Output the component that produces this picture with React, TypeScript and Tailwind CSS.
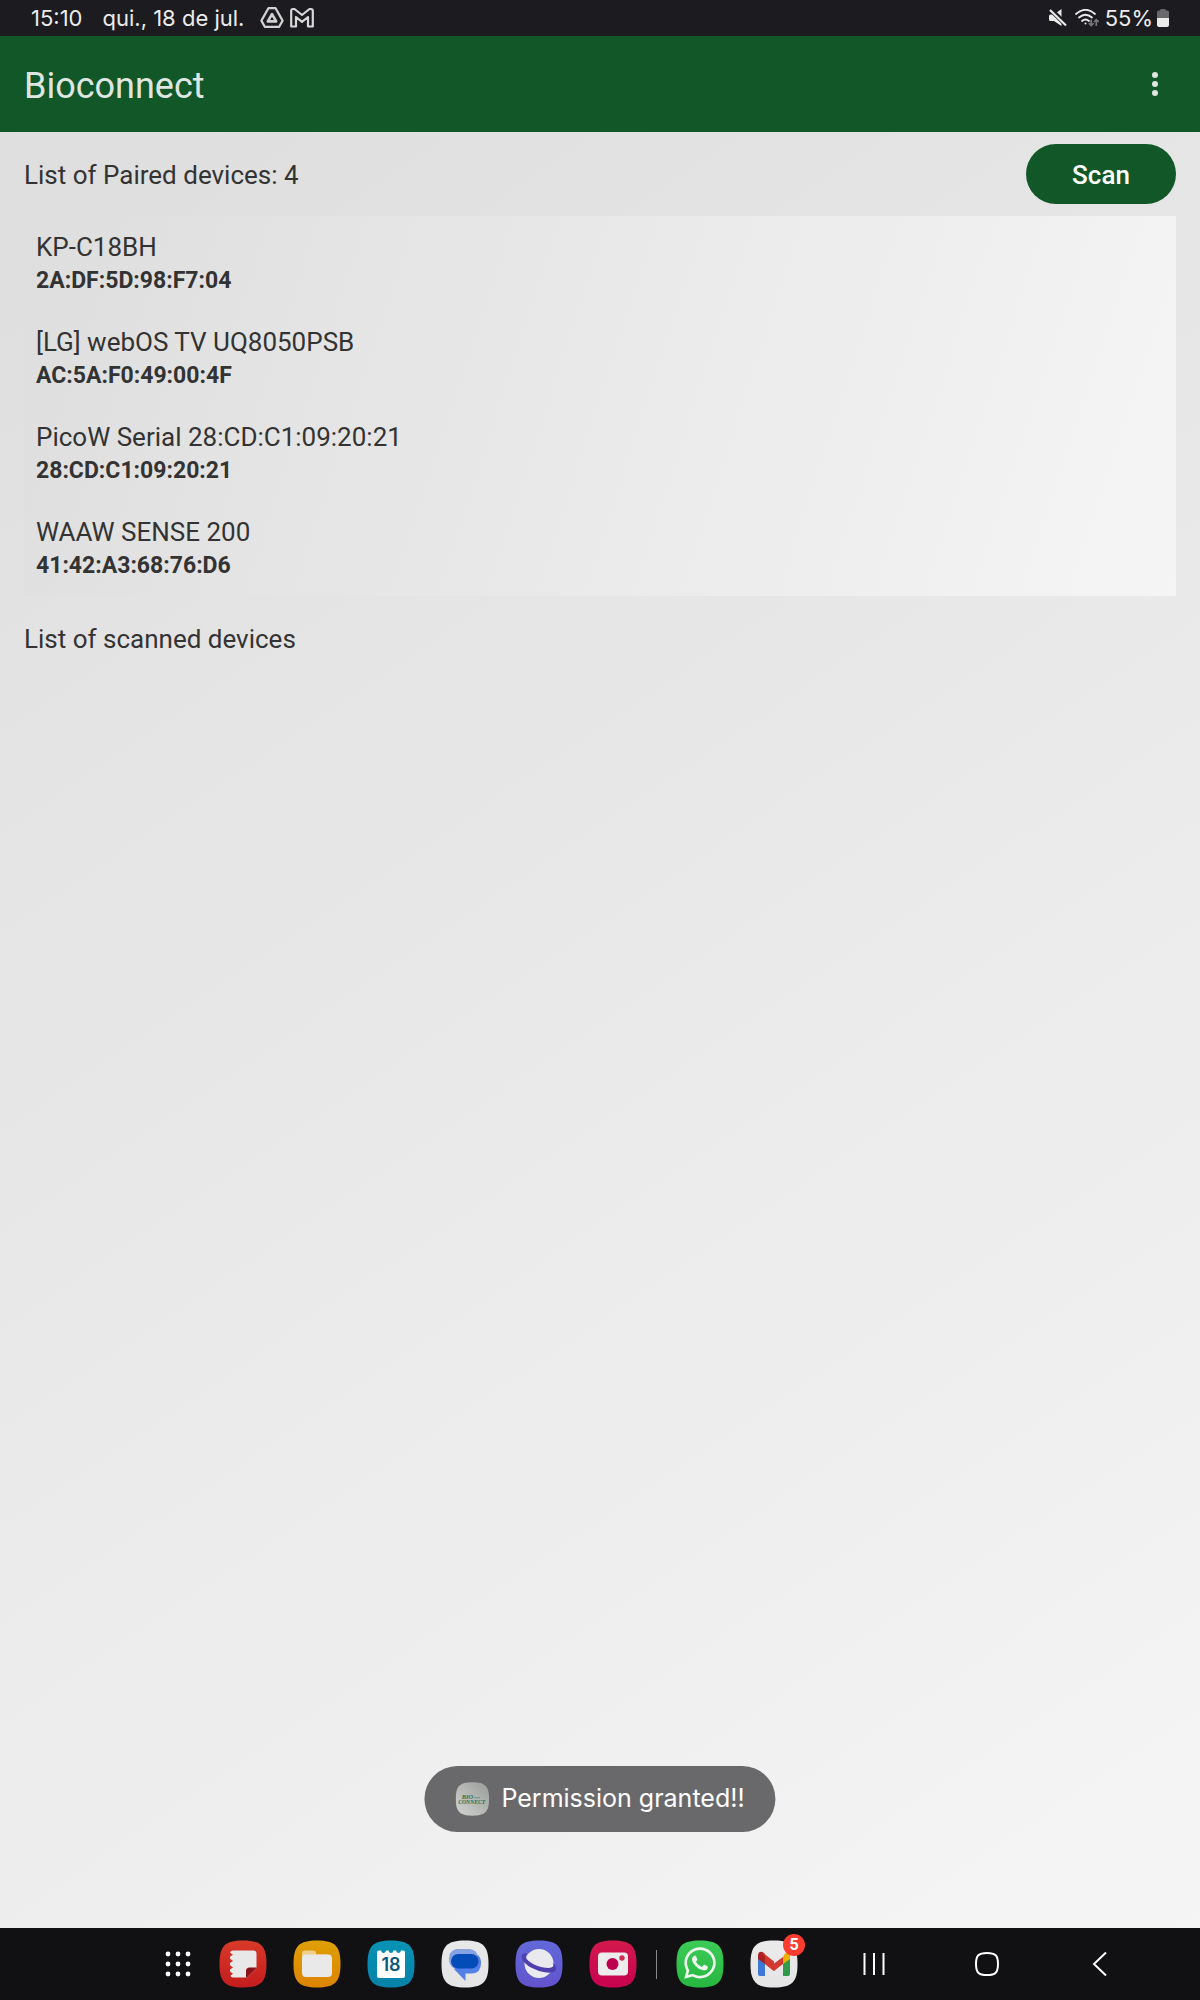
import React, { useState } from "react";
import { FaWhatsapp } from "react-icons/fa";

const SQUIRCLE = "M24 .5C42 .5 47.5 6 47.5 24S42 47.500 24 47.500 .5 42 .5 24 6 .5 24 .5Z";

const devices = [
  { name: "KP-C18BH", mac: "2A:DF:5D:98:F7:04" },
  { name: "[LG] webOS TV UQ8050PSB", mac: "AC:5A:F0:49:00:4F" },
  { name: "PicoW Serial 28:CD:C1:09:20:21", mac: "28:CD:C1:09:20:21" },
  { name: "WAAW SENSE 200", mac: "41:42:A3:68:76:D6" },
];

function StatusBar() {
  return (
    <header className="flex h-9 items-center justify-between bg-[#1c1b20] pr-[31px] pl-[31px] font-['Inter',sans-serif] text-[22px] leading-9 text-[#ebebeb]">
      <div className="flex items-center">
        <time>15:10</time>
        <span className="ml-5">qui., 18 de jul.</span>
        <svg className="ml-4 h-6 w-6" viewBox="0 0 24 24" fill="none" stroke="#d2d2d2" strokeLinejoin="round" aria-label="Drive">
          <path d="M8.400 2.200H15.600L22.600 14.600 19.200 20.800H4.800L1.400 14.600Z" strokeWidth="2.200" />
          <path d="M12 8.200 16.200 15.400H7.800Z" strokeWidth="2.600" />
        </svg>
        <svg className="ml-1.5 h-6 w-6" viewBox="0 0 24 24" fill="none" stroke="#d8d8d8" strokeWidth="2.200" strokeLinejoin="round" aria-label="Gmail">
          <path d="M1.200 5Q1.200 3 3.200 3H4.500L12 9 19.500 3H20.800Q22.800 3 22.800 5V20.500H18V11L12 15.800 6 11V20.500H1.200Z" />
        </svg>
      </div>
      <div className="flex items-center">
        <svg className="h-[18px] w-[18px]" viewBox="0 0 18 18" fill="#ebebeb" aria-label="Muted">
          <path d="M1.500 5.500H5L12.500 0V17L5 12H1.500Q0 12 0 10.500V7Q0 5.500 1.500 5.500Z" />
          <path d="M.5-.5 18 16.500" stroke="#1c1b20" strokeWidth="5" />
          <path d="M1 1 17 16.500" stroke="#ebebeb" strokeWidth="2.200" />
        </svg>
        <svg className="ml-2 h-[18px] w-6" viewBox="0 0 24 18" fill="none" stroke="#ebebeb" strokeWidth="1.800" strokeLinecap="round" aria-label="Wi-Fi">
          <path d="M1 5Q10.500-3.500 20 5" />
          <path d="M4 8.500Q10.500 3 17 8.500" />
          <path d="M7 12Q10.500 9 14 12" />
          <circle cx="10.500" cy="14.500" r="1" fill="#ebebeb" stroke="none" />
          <g stroke="#77767a" strokeWidth="1.700" strokeLinecap="butt">
            <path d="M16.200 10.500V16.500M13.800 14.200 16.200 16.600 18.600 14.200" />
            <path d="M21.300 17V11M18.900 13 21.300 10.600 23.700 13" />
          </g>
        </svg>
        <span className="ml-1.5">55%</span>
        <svg className="ml-1 h-[18px] w-3" viewBox="0 0 12 18" aria-label="Battery">
          <path d="M3 1.500Q3 0 4.500 0H7.500Q9 0 9 1.500H10.500Q12 1.500 12 3V9H0V3Q0 1.500 1.500 1.500Z" fill="#69686c" />
          <path d="M0 9H12V16Q12 18 10 18H2Q0 18 0 16Z" fill="#ebebeb" />
        </svg>
      </div>
    </header>
  );
}

function AppIcon({ label, from, to, children }: { label: string; from: string; to: string; children: React.ReactNode }) {
  const id = "fill-" + label.replace(/\W/g, "");
  return (
    <button type="button" aria-label={label} className="relative flex h-[72px] w-[74px] items-center justify-center">
      <svg className="h-12 w-12" viewBox="0 0 48 48">
        <defs>
          <linearGradient id={id} x1="0" y1="0" x2="0" y2="1">
            <stop stopColor={from} />
            <stop offset="1" stopColor={to} />
          </linearGradient>
        </defs>
        <path d={SQUIRCLE} fill={`url(#${id})`} />
        {children}
      </svg>
    </button>
  );
}

function TaskBar() {
  return (
    <nav className="flex h-[72px] shrink-0 items-center justify-end bg-[#111113] pr-11">
      <button type="button" aria-label="All apps" className="flex h-full w-14 items-center justify-center">
        <svg className="h-[26px] w-[26px]" viewBox="0 0 26 26" fill="#fff">
          {[3, 13, 23].map((y) => [3, 13, 23].map((x) => <circle key={`${x}-${y}`} cx={x} cy={y} r="2.400" />))}
        </svg>
      </button>
      <AppIcon label="Notes" from="#d83a28" to="#c41c1e">
        <path d="M14 10.500H34Q37.500 10.500 37.500 14V28L28 37.500H14Q11.500 37.500 11.500 35.500L14 33.800 11 31.500V29.500L14 27.500 11 25.200V23L14 21 11 18.700V16.700L14 14.800 11 12.500Q11.500 10.500 14 10.500Z" fill="#e8e8e8" />
        <path d="M37.500 27.500V28L28 37.500H27V31Q27 27.500 30.500 27.500Z" fill="#8d1118" />
      </AppIcon>
      <AppIcon label="My Files" from="#dfa006" to="#dc8300">
        <path d="M9 20V13.500Q9 10.500 12 10.500H20Q23 10.500 23 13.500V14.500H34V20Z" fill="#f0cf88" />
        <rect x="9" y="14.500" width="30" height="22.500" rx="4" fill="#e9e9e9" />
      </AppIcon>
      <AppIcon label="Calendar" from="#0793b4" to="#0781a8">
        <path d="M12 10.500H14Q14.500 13 16.500 13T19 10.500H21.500Q22 13 24 13T26.500 10.500H29Q29.500 13 31.500 13T34 10.500H36Q38 10.500 38 12.500V36Q38 38 36 38H12Q10 38 10 36V12.500Q10 10.500 12 10.500Z" fill="#fff" />
        <text x="24" y="31" textAnchor="middle" fontFamily="Inter, sans-serif" fontSize="18" fontWeight="600" fill="#0b5878">18</text>
      </AppIcon>
      <AppIcon label="Messages" from="#e8e8e8" to="#e5e5e5">
        <path d="M15 9H29Q36 10 37 17V20L15 29Q8 27 8 19T15 9Z" fill="#86a2e3" />
        <path d="M37 15Q40 18 40 23 40 33 31 33.500H24.500V41L13 29Z" fill="#5380e8" />
        <rect x="10" y="14" width="27.500" height="14.500" rx="7.250" fill="#044cb7" />
      </AppIcon>
      <AppIcon label="Internet" from="#6169d9" to="#6253cd">
        <circle cx="24" cy="23.500" r="14.500" fill="#e9e9ee" />
        <path d="M12 13Q5 13 7 19 10 26 24 31 38 35 41 30 42 26 37.500 23 41 27 34 28 26 28 18 24 8 18.500 12 13Z" fill="#503fae" />
      </AppIcon>
      <AppIcon label="Camera" from="#d3194d" to="#c8024f">
        <rect x="9" y="12.500" width="30" height="23" rx="4" fill="#ececec" />
        <circle cx="23.500" cy="24" r="6" fill="#bd004d" />
        <circle cx="33" cy="18" r="2.700" fill="#d12d50" />
      </AppIcon>
      <div className="mx-1.5 h-[29px] w-px bg-[#8a8a8c]" />
      <AppIcon label="WhatsApp" from="#3bcc58" to="#27b63f">
        <FaWhatsapp x="6" y="5" size={36} color="#eef6ee" />
      </AppIcon>
      <div className="relative">
        <AppIcon label="Gmail" from="#ebebeb" to="#e5e5e5">
          <path d="M8 16 15 20V36H10Q8 36 8 34Z" fill="#4078d8" />
          <path d="M33 20 40 15V34Q40 36 38 36H33Z" fill="#319b4b" />
          <path d="M33 16.500 35.500 13Q40 11 40 16V19L33 24Z" fill="#efb000" />
          <path d="M15 17 24 23.500 33 17V24L24 31 15 24Z" fill="#d33a2f" />
          <path d="M15 24 8 19V16Q8 11 12.500 12L15 14Z" fill="#ad2022" />
          <path d="M12 12 24 21.500V31L15 24V17Z" fill="#d33a2f" />
        </AppIcon>
        <span className="absolute top-1.5 right-1.5 h-[22px] w-[22px] rounded-full bg-[#fd3c30] text-center font-['Roboto',sans-serif] text-base leading-[22px] font-bold text-white">5</span>
      </div>
      <div className="ml-1.5 flex h-full text-white">
        <button type="button" aria-label="Recents" className="flex h-full w-[113px] items-center justify-center">
          <svg className="h-6 w-6" viewBox="0 0 24 24" stroke="currentColor" strokeWidth="2"><path d="M2.500 1V23M12 1V23M21.500 1V23" /></svg>
        </button>
        <button type="button" aria-label="Home" className="flex h-full w-[113px] items-center justify-center">
          <svg className="h-6 w-6" viewBox="0 0 24 24" fill="none" stroke="currentColor" strokeWidth="2"><path d="M12 1C20.500 1 23 3.500 23 12S20.500 23 12 23 1 20.500 1 12 3.500 1 12 1Z" /></svg>
        </button>
        <button type="button" aria-label="Back" className="flex h-full w-[113px] items-center justify-center">
          <svg className="h-6 w-6" viewBox="0 0 24 24" fill="none" stroke="currentColor" strokeWidth="2"><path d="M18 .5 6 12 18 23.500" /></svg>
        </button>
      </div>
    </nav>
  );
}

function Toast() {
  return (
    <div role="status" className="absolute bottom-24 left-1/2 flex h-[66px] -translate-x-1/2 items-center gap-3 rounded-full bg-[#69696b] px-[31px] font-['Inter',sans-serif] text-[25px] whitespace-nowrap text-white">
      <svg className="h-[34px] w-[34px]" viewBox="0 0 48 48">
        <defs>
          <linearGradient id="bio" x1="1" y1="0" x2="0" y2="1">
            <stop stopColor="#9a9c9a" />
            <stop offset="1" stopColor="#d2d4d1" />
          </linearGradient>
        </defs>
        <path d={SQUIRCLE} fill="url(#bio)" />
        <g fontFamily="Liberation Serif, serif" fontStyle="italic" fontWeight="700" fill="#23704a">
          <text x="9" y="24" fontSize="9">BIO</text>
          <text x="4" y="31" fontSize="8">CONNECT</text>
        </g>
        <path d="M26 22H35" stroke="#7d9a89" strokeWidth="2" />
      </svg>
      Permission granted!!
    </div>
  );
}

export default function App() {
  const [scanning, setScanning] = useState(false);
  return (
    <div className="flex min-h-screen flex-col font-['Roboto',sans-serif] text-[#333]">
      <StatusBar />
      <div className="flex h-24 items-center justify-between bg-[#115728] pr-[33px] pl-6 text-[#dfe6e1]">
        <h1 className="pt-1 text-4xl">Bioconnect</h1>
        <button type="button" aria-label="More options" className="flex h-12 w-6 items-center justify-center">
          <svg className="h-6 w-6" viewBox="0 0 24 24" fill="currentColor">
            <circle cx="12" cy="3" r="3" />
            <circle cx="12" cy="12" r="3" />
            <circle cx="12" cy="21" r="3" />
          </svg>
        </button>
      </div>
      <main className="relative flex-1 bg-[linear-gradient(146deg,#dedede,#f5f5f5)] px-6 pt-3">
        <div className="flex items-center justify-between">
          <h2 className="pt-0.5 text-[26px]">List of Paired devices: 4</h2>
          <button type="button" aria-pressed={scanning} onClick={() => setScanning(!scanning)} className="h-[60px] w-[150px] rounded-full bg-[#115728] pt-0.5 text-[26px] font-medium text-white">
            Scan
          </button>
        </div>
        <ul className="mt-3 bg-[linear-gradient(108deg,#dedede,#f5f5f5)] px-3">
          {devices.map((d) => (
            <li key={d.mac} className="h-[95px] pt-[13px]">
              <p className="text-[26px] leading-9">{d.name}</p>
              <p className="text-[23px] leading-8 font-bold">{d.mac}</p>
            </li>
          ))}
        </ul>
        <h2 className="mt-6 text-[26px]">List of scanned devices</h2>
        <Toast />
      </main>
      <TaskBar />
    </div>
  );
}
